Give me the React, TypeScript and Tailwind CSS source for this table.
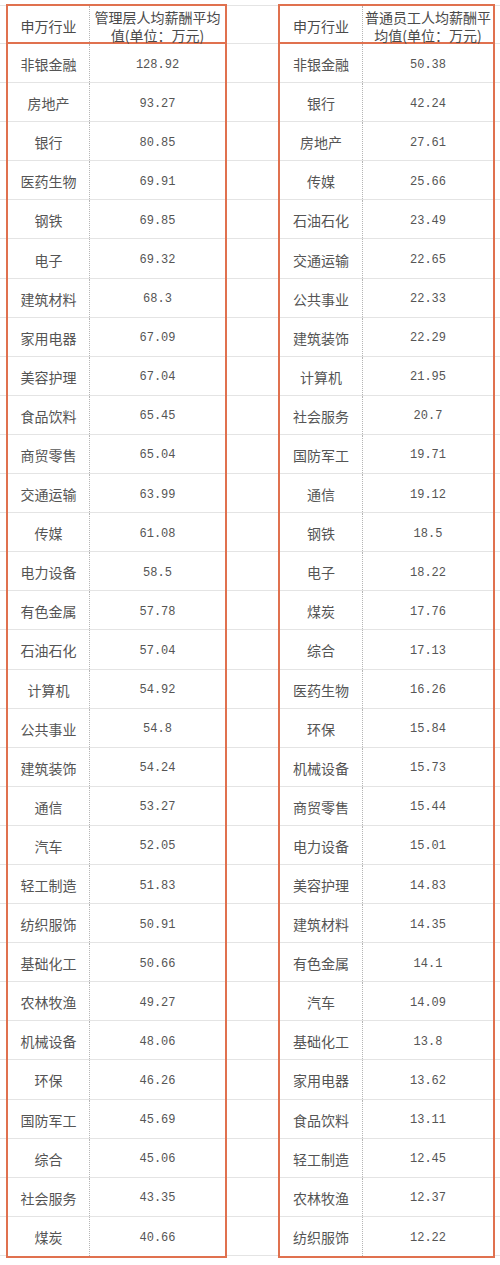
import React from 'react';

type Row = [string, string];

const leftRows: Row[] = [
  ['非银金融', '128.92'],
  ['房地产', '93.27'],
  ['银行', '80.85'],
  ['医药生物', '69.91'],
  ['钢铁', '69.85'],
  ['电子', '69.32'],
  ['建筑材料', '68.3'],
  ['家用电器', '67.09'],
  ['美容护理', '67.04'],
  ['食品饮料', '65.45'],
  ['商贸零售', '65.04'],
  ['交通运输', '63.99'],
  ['传媒', '61.08'],
  ['电力设备', '58.5'],
  ['有色金属', '57.78'],
  ['石油石化', '57.04'],
  ['计算机', '54.92'],
  ['公共事业', '54.8'],
  ['建筑装饰', '54.24'],
  ['通信', '53.27'],
  ['汽车', '52.05'],
  ['轻工制造', '51.83'],
  ['纺织服饰', '50.91'],
  ['基础化工', '50.66'],
  ['农林牧渔', '49.27'],
  ['机械设备', '48.06'],
  ['环保', '46.26'],
  ['国防军工', '45.69'],
  ['综合', '45.06'],
  ['社会服务', '43.35'],
  ['煤炭', '40.66'],
];

const rightRows: Row[] = [
  ['非银金融', '50.38'],
  ['银行', '42.24'],
  ['房地产', '27.61'],
  ['传媒', '25.66'],
  ['石油石化', '23.49'],
  ['交通运输', '22.65'],
  ['公共事业', '22.33'],
  ['建筑装饰', '22.29'],
  ['计算机', '21.95'],
  ['社会服务', '20.7'],
  ['国防军工', '19.71'],
  ['通信', '19.12'],
  ['钢铁', '18.5'],
  ['电子', '18.22'],
  ['煤炭', '17.76'],
  ['综合', '17.13'],
  ['医药生物', '16.26'],
  ['环保', '15.84'],
  ['机械设备', '15.73'],
  ['商贸零售', '15.44'],
  ['电力设备', '15.01'],
  ['美容护理', '14.83'],
  ['建筑材料', '14.35'],
  ['有色金属', '14.1'],
  ['汽车', '14.09'],
  ['基础化工', '13.8'],
  ['家用电器', '13.62'],
  ['食品饮料', '13.11'],
  ['轻工制造', '12.45'],
  ['农林牧渔', '12.37'],
  ['纺织服饰', '12.22'],
];

const cjk = "font-['Noto_Sans_CJK_SC',sans-serif]";
const mono = "font-['Liberation_Mono','Noto_Sans_CJK_SC',monospace]";

// gray grid lines that run through the gaps between the two tables
const Filler = ({ className }: { className: string }) => (
  <div className={`flex flex-col ${className}`}>
    <div className="mt-[1px] h-[39px] border-y border-[#e4e4e4]" />
    {leftRows.map((_, i) => (
      <div key={i} className="h-[39.1px] border-b border-[#e4e4e4]" />
    ))}
  </div>
);

const SalaryTable = ({
  rows,
  title,
  width,
  firstCol,
}: {
  rows: Row[];
  title: [string, string];
  width: string;
  firstCol: string;
}) => (
  <div className={`flex flex-col border-2 border-[#e0714f] ${width}`}>
    {/* Header */}
    <div className="flex h-[38px] border-b-2 border-[#e0714f] text-[14px] leading-[18px] text-[#4a4a4a]">
      <div
        className={`${firstCol} flex items-center justify-center pt-[3px] border-r border-dotted border-[#b5b5b5] ${cjk}`}
      >
        申万行业
      </div>
      <div className={`flex-1 flex flex-col items-center justify-center pt-[3px] whitespace-nowrap ${cjk}`}>
        <span>{title[0]}</span>
        <span>{title[1]}</span>
      </div>
    </div>

    {/* Rows */}
    {rows.map(([name, value], i) => (
      <div
        key={name}
        className={`flex h-[39.1px] text-[#555555] ${i < rows.length - 1 ? 'border-b border-[#e4e4e4]' : ''}`}
      >
        <div
          className={`${firstCol} flex items-center justify-center pt-[3px] text-[14px] border-r border-dotted border-[#b5b5b5] ${cjk}`}
        >
          {name}
        </div>
        <div className={`flex-1 flex items-center justify-center pt-[3px] text-[12px] ${mono}`}>
          {value}
        </div>
      </div>
    ))}
  </div>
);

export default function App() {
  return (
    <div className="w-[500px] h-[1265px] bg-white flex items-start pt-[4px] overflow-hidden">
      <Filler className="w-[6px]" />
      <SalaryTable
        rows={leftRows}
        title={['管理层人均薪酬平均', '值(单位：万元)']}
        width="w-[221px]"
        firstCol="w-[82px]"
      />
      <Filler className="w-[51px]" />
      <SalaryTable
        rows={rightRows}
        title={['普通员工人均薪酬平', '均值(单位：万元)']}
        width="w-[217px]"
        firstCol="w-[83px]"
      />
      <Filler className="flex-1" />
    </div>
  );
}
